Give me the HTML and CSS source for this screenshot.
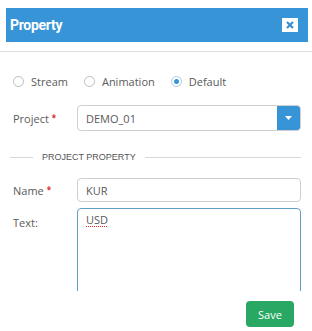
FILE: index.html
```html
<!DOCTYPE html>
<html>
<head>
<meta charset="utf-8">
<link rel="stylesheet" href="styles.css">
</head>
<body>
<div class="dialog">
  <div class="header">
    <span class="title">Property</span>
    <span class="close"><svg width="8" height="8" viewBox="0 0 8 8"><path d="M1 1L7 7M7 1L1 7" stroke="#3a8fcf" stroke-width="2.2"/></svg></span>
  </div>
  <div class="rule"></div>
  <div class="content">
    <div class="radios">
      <label class="radio"><span class="dot"></span>Stream</label>
      <label class="radio"><span class="dot"></span>Animation</label>
      <label class="radio"><span class="dot on"></span>Default</label>
    </div>
    <div class="row project">
      <span class="label">Project <b class="req">*</b></span>
      <div class="select">
        <span class="value">DEMO_01</span>
        <span class="arrow"><svg width="7" height="4" viewBox="0 0 7 4"><path d="M0 0H7L3.5 4Z" fill="#fff"/></svg></span>
      </div>
    </div>
    <div class="legend">
      <span class="line short"></span>
      <span class="legend-text">PROJECT PROPERTY</span>
      <span class="line long"></span>
    </div>
    <div class="row name">
      <span class="label">Name <b class="req">*</b></span>
      <div class="input">KUR</div>
    </div>
    <div class="row text">
      <span class="label">Text:</span>
      <div class="textarea"><span class="spell">USD</span></div>
    </div>
  </div>
  <div class="footer">
    <button class="save">Save</button>
  </div>
</div>
</body>
</html>
```
FILE: styles.css
```css
html, body {
  margin: 0;
  padding: 0;
  background: #fff;
}
body {
  font-family: "Open Sans", "Noto Sans", sans-serif;
  font-size: 11px;
  color: #5a5a5a;
}
.dialog {
  width: 312px;
  height: 331px;
  overflow: hidden;
}
.header {
  margin: 8px 4px 0 6px;
  height: 34px;
  background: #3795d7;
  display: flex;
  align-items: center;
  justify-content: space-between;
  padding: 0 10px 0 4px;
}
.title {
  font-family: Roboto, sans-serif;
  font-weight: bold;
  font-size: 14px;
  color: #fff;
  letter-spacing: -0.3px;
}
.close {
  width: 16px;
  height: 14px;
  background: #fff;
  display: flex;
  align-items: center;
  justify-content: center;
}
.rule {
  height: 1px;
  background: #dedede;
  margin-top: 9px;
}
.content {
  height: 239px;
  overflow: hidden;
  padding: 0 11px 0 13px;
}
.radios {
  display: flex;
  align-items: center;
  height: 16px;
  margin-top: 21px;
}
.radio {
  display: flex;
  align-items: center;
  margin-right: 16px;
}
.dot {
  width: 9px;
  height: 9px;
  border: 1px solid #bdbdbd;
  border-radius: 50%;
  margin-right: 7px;
  box-sizing: content-box;
  position: relative;
}
.dot.on {
  border-color: #a9cce6;
}
.dot.on::after {
  content: "";
  position: absolute;
  left: 2px;
  top: 2px;
  width: 5px;
  height: 5px;
  border-radius: 50%;
  background: #3795d7;
}
.row {
  display: flex;
  align-items: center;
}
.label {
  width: 64px;
  flex: none;
}
.req {
  color: #d9302b;
  font-weight: bold;
  font-size: 8px;
  vertical-align: 2px;
}
.project {
  margin-top: 16px;
}
.select {
  flex: 1;
  height: 26px;
  box-sizing: border-box;
  border: 1px solid #cfcfcf;
  border-radius: 4px;
  display: flex;
  align-items: stretch;
  overflow: hidden;
}
.select .value {
  flex: 1;
  padding-left: 8px;
  display: flex;
  align-items: center;
}
.arrow {
  width: 23px;
  background: #3795d7;
  display: flex;
  align-items: center;
  justify-content: center;
}
.legend {
  display: flex;
  align-items: center;
  margin: 20px 0 0 -3px;
  height: 12px;
}
.line {
  height: 1px;
  background: #d8d8d8;
}
.line.short {
  width: 23px;
}
.line.long {
  flex: 1;
}
.legend-text {
  font-family: "Liberation Sans", Arial, sans-serif;
  font-size: 9px;
  color: #555;
  padding: 0 9px;
}
.name {
  margin-top: 15px;
}
.input {
  flex: 1;
  height: 24px;
  box-sizing: border-box;
  border: 1px solid #cfcfcf;
  border-radius: 4px;
  padding-left: 8px;
  display: flex;
  align-items: center;
}
.text {
  margin-top: 6px;
  align-items: flex-start;
}
.text .label {
  padding-top: 7px;
}
.textarea {
  flex: 1;
  height: 120px;
  box-sizing: border-box;
  border: 1px solid #5f9fc6;
  border-radius: 4px;
  padding: 3px 8px;
}
.spell {
  text-decoration: underline dotted #d9302b;
  text-decoration-thickness: 1px;
  text-underline-offset: 2px;
}
.footer {
  display: flex;
  justify-content: flex-end;
  padding: 10px 18px 0 0;
}
.save {
  width: 48px;
  height: 26px;
  border: none;
  border-radius: 4px;
  background: #28a862;
  color: #fff;
  font-family: "Open Sans", "Noto Sans", sans-serif;
  font-size: 11px;
  padding: 0;
}
```
